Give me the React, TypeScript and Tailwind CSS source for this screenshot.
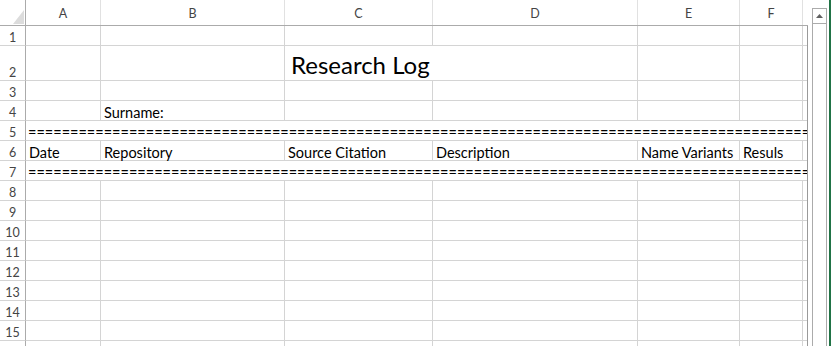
import React from "react";

const cols = [
  { key: "A", w: "w-[75px]" },
  { key: "B", w: "w-[184px]" },
  { key: "C", w: "w-[148px]" },
  { key: "D", w: "w-[205px]" },
  { key: "E", w: "w-[102px]" },
  { key: "F", w: "w-[63px]" },
];

const equals = "=".repeat(140);

function RowHead({ n }: { n: number }) {
  return (
    <div className="flex w-[26px] shrink-0 items-end justify-center border-r border-b border-r-[#ababab] border-b-[#d4d4d4] text-[12.5px] leading-[14px] text-[#444]">
      {n}
    </div>
  );
}

function Cell({ w, text, last }: { w: string; text?: string; last?: boolean }) {
  return (
    <div
      className={`${w} flex shrink-0 items-end overflow-visible whitespace-nowrap border-b border-[#d4d4d4] pl-[3px] text-[14.5px] leading-[14px] text-black ${
        last ? "" : "border-r"
      }`}
    >
      {text}
    </div>
  );
}

function PlainRow({ n, h = "h-[20px]", texts = [] }: { n: number; h?: string; texts?: string[] }) {
  return (
    <div className={`flex ${h} shrink-0`}>
      <RowHead n={n} />
      {cols.map((c, i) => (
        <Cell key={c.key} w={c.w} text={texts[i]} />
      ))}
      <Cell w="w-[4px]" last />
    </div>
  );
}

function RuleRow({ n }: { n: number }) {
  return (
    <div className="flex h-[20px] shrink-0">
      <RowHead n={n} />
      <div className="flex w-[781px] shrink-0 items-end overflow-hidden whitespace-nowrap border-b border-[#d4d4d4] pl-[2px] text-[14.5px] leading-[14px] text-black">
        {equals}
      </div>
    </div>
  );
}

export default function App() {
  return (
    <div className="flex h-[346px] w-[831px] overflow-hidden bg-white font-['Lato',sans-serif]">
      <div className="flex w-[808px] shrink-0 flex-col">
        {/* column headers */}
        <div className="flex h-[26px] shrink-0 border-b border-[#ababab]">
          <div className="flex w-[26px] shrink-0 items-end justify-end border-r border-[#ababab] pb-px pr-px">
            <svg width="11" height="14" viewBox="0 0 11 14">
              <polygon points="0,14 11,14 11,0" fill="#dcdcdc" />
            </svg>
          </div>
          {cols.map((c) => (
            <div
              key={c.key}
              className={`${c.w} flex shrink-0 items-end justify-center border-r border-[#e1e1e1] pb-px text-[12.5px] text-[#444]`}
            >
              {c.key}
            </div>
          ))}
          <div className="w-[5px] shrink-0" />
        </div>

        <div className="flex flex-1 flex-col border-r border-[#9a9a9a]">
          <PlainRow n={1} />
          <div className="flex h-[35px] shrink-0">
            <RowHead n={2} />
            <Cell w={cols[0].w} />
            <Cell w={cols[1].w} />
            <div className="flex w-[353px] shrink-0 items-end whitespace-nowrap border-r border-b border-[#d4d4d4] pb-px pl-[6px] text-[24px] leading-[29px] text-black">
              Research Log
            </div>
            <Cell w={cols[4].w} />
            <Cell w={cols[5].w} />
            <Cell w="w-[4px]" last />
          </div>
          <PlainRow n={3} />
          <PlainRow n={4} texts={["", "Surname:"]} />
          <RuleRow n={5} />
          <PlainRow
            n={6}
            texts={["Date", "Repository", "Source Citation", "Description", "Name Variants", "Resuls"]}
          />
          <RuleRow n={7} />
          {[8, 9, 10, 11, 12, 13, 14, 15, 16].map((n) => (
            <PlainRow key={n} n={n} />
          ))}
        </div>
      </div>

      {/* vertical scrollbar */}
      <div className="ml-[4px] mt-[8px] flex w-[15px] shrink-0 flex-col border-x border-t border-x-[#ababab] border-t-[#ababab] bg-white">
        <div className="flex h-[15px] items-center justify-center border-b border-[#ababab]">
          <svg width="7" height="4" viewBox="0 0 7 4">
            <polygon points="0,4 7,4 3.5,0" fill="#606060" />
          </svg>
        </div>
      </div>
      <div className="w-[2px] shrink-0" />
      <div className="w-[2px] shrink-0 bg-[#217346]" />
    </div>
  );
}
